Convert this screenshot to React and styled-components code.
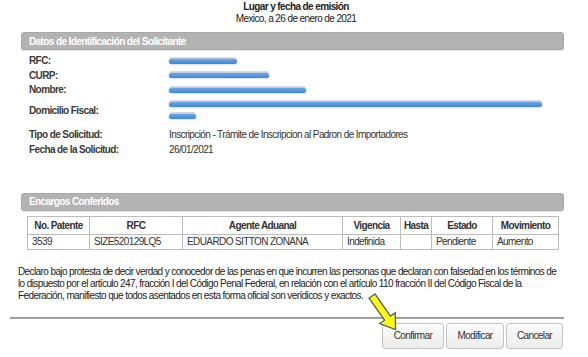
import styled, { createGlobalStyle } from 'styled-components';

const GlobalStyle = createGlobalStyle`
    * {
        box-sizing: border-box;
    }

    body {
        margin: 0;
        background: #fff;
        font-family: 'Liberation Sans', Arial, sans-serif;
        font-size: 10px;
        letter-spacing: -0.6px;
        color: #333;
    }
`;

const datos = [
    { label: 'RFC:', bars: [68] },
    { label: 'CURP:', bars: [100] },
    { label: 'Nombre:', bars: [137] },
    { label: 'Domicilio Fiscal:', bars: [373, 27] },
    { label: 'Tipo de Solicitud:', value: 'Inscripción - Trámite de Inscripcion al Padron de Importadores', spaced: true },
    { label: 'Fecha de la Solicitud:', value: '26/01/2021' },
];

const columnas = [
    { title: 'No. Patente', width: 62 },
    { title: 'RFC', width: 93 },
    { title: 'Agente Aduanal', width: 160 },
    { title: 'Vigencia', width: 58 },
    { title: 'Hasta', width: 31 },
    { title: 'Estado', width: 61 },
    { title: 'Movimiento', width: 66 },
];

const encargos = [['3539', 'SIZE520129LQ5', 'EDUARDO SITTON ZONANA', 'Indefinida', '', 'Pendiente', 'Aumento']];

const botones = [
    { label: 'Confirmar', width: 62 },
    { label: 'Modificar', width: 58 },
    { label: 'Cancelar', width: 57 },
];

const App = () => {
    return (
        <Page>
            <GlobalStyle />
            <Heading>
                <strong>Lugar y fecha de emisión</strong>
                <span>Mexico, a 26 de enero de 2021</span>
            </Heading>

            <Panel>
                <PanelHeader>Datos de Identificación del Solicitante</PanelHeader>
                <InfoGrid>
                    {datos.map((row) => (
                        <InfoRow key={row.label} $spaced={row.spaced}>
                            <Label>{row.label}</Label>
                            {row.value ? (
                                <Value>{row.value}</Value>
                            ) : (
                                <Hidden>
                                    {row.bars.map((w, i) => (
                                        <BlurLine key={i}>
                                            <Redaction style={{ width: w }} />
                                        </BlurLine>
                                    ))}
                                </Hidden>
                            )}
                        </InfoRow>
                    ))}
                </InfoGrid>
            </Panel>

            <Panel $top={37}>
                <PanelHeader>Encargos Conferidos</PanelHeader>
                <Table>
                    <colgroup>
                        {columnas.map((col) => (
                            <col key={col.title} width={col.width} />
                        ))}
                    </colgroup>
                    <thead>
                        <tr>
                            {columnas.map((col) => (
                                <Th key={col.title}>{col.title}</Th>
                            ))}
                        </tr>
                    </thead>
                    <tbody>
                        {encargos.map((row) => (
                            <tr key={row[0]}>
                                {row.map((cell, i) => (
                                    <Td key={i}>{cell}</Td>
                                ))}
                            </tr>
                        ))}
                    </tbody>
                </Table>
            </Panel>

            <Declaration>
                Declaro bajo protesta de decir verdad y conocedor de las penas en que incurren las personas que declaran con falsedad en los términos de
                <br />
                lo dispuesto por el artículo 247, fracción I del Código Penal Federal, en relación con el artículo 110 fracción II del Código Fiscal de la
                <br />
                Federación, manifiesto que todos asentados en esta forma oficial son verídicos y exactos.
            </Declaration>

            <Divider />

            <ButtonBar>
                {botones.map((btn) => (
                    <ActionButton key={btn.label} $width={btn.width}>
                        {btn.label}
                    </ActionButton>
                ))}
            </ButtonBar>

            <Pointer width="48" height="52" viewBox="0 0 48 52">
                <g transform="translate(12 8) rotate(55)">
                    <polygon
                        points="0,-3.6 27,-3.6 27,-9.5 41,0 27,9.5 27,3.6 0,3.6"
                        fill="#ffff00"
                        stroke="#4f5b78"
                        strokeWidth="1.3"
                        strokeLinejoin="miter"
                    />
                </g>
            </Pointer>
        </Page>
    );
};

export default App;

const Page = styled.div`
    position: relative;
    width: 588px;
    height: 357px;
    overflow: hidden;
    padding-top: 1px;
`;

const Heading = styled.div`
    display: flex;
    flex-direction: column;
    align-items: center;
    line-height: 12px;
    color: #222;
    padding-left: 4px;

    strong {
        font-weight: bold;
    }
`;

const Panel = styled.section`
    margin: ${(props) => props.$top || 7}px 24px 0 21px;
`;

const PanelHeader = styled.div`
    height: 18px;
    padding-left: 7px;
    display: flex;
    align-items: center;
    background-color: #b3b3b3;
    border: 1px solid #a8a8a8;
    border-radius: 3px;
    box-shadow: 0 1px 1px rgba(0, 0, 0, 0.12);
    color: #fff;
    font-weight: bold;
`;

const InfoGrid = styled.div`
    display: flex;
    flex-direction: column;
    gap: 2.5px;
    padding: 5px 0 0 8px;
`;

const InfoRow = styled.div`
    display: grid;
    grid-template-columns: 140px 1fr;
    align-items: center;
    line-height: 12px;
    margin-top: ${(props) => (props.$spaced ? 4 : 0)}px;
`;

const Label = styled.span`
    font-weight: bold;
    color: #3a3a3a;
`;

const Value = styled.span`
    color: #333;
`;

const Hidden = styled.div`
    display: flex;
    flex-direction: column;
`;

const BlurLine = styled.div`
    height: 12px;
    display: flex;
    align-items: center;
`;

const Redaction = styled.span`
    display: block;
    height: 5px;
    border-radius: 2px;
    background: linear-gradient(#6ea6e6, #3f86d6);
    box-shadow: 0 0 2px rgba(63, 134, 214, 0.7), 0 -3px 0 -1px rgba(120, 120, 120, 0.25);
`;

const Table = styled.table`
    margin: 5px 0 0 6px;
    width: 531px;
    border-collapse: collapse;
    table-layout: fixed;
`;

const Th = styled.th`
    height: 18px;
    border: 1px solid #bdbdbd;
    font-weight: bold;
    color: #333;
    text-align: center;
    padding: 0 3px;
`;

const Td = styled.td`
    height: 15px;
    border: 1px solid #bdbdbd;
    color: #333;
    padding: 0 3px 0 4px;
    line-height: 12px;
`;

const Declaration = styled.p`
    margin: 16px 0 0 18px;
    line-height: 12px;
    color: #222;
`;

const Divider = styled.hr`
    margin: 15px 24px 0 10px;
    height: 2px;
    border: none;
    background: #a9a9a9;
    border-top: 1px solid #999;
`;

const ButtonBar = styled.div`
    display: flex;
    justify-content: flex-end;
    gap: 2px;
    padding-right: 25px;
    margin-top: 4px;
`;

const ActionButton = styled.button`
    width: ${(props) => props.$width}px;
    height: 26px;
    padding: 0;
    border: 1px solid #c4c4c4;
    border-radius: 3px;
    background: linear-gradient(#fbfbfb, #ececec);
    font-family: 'Liberation Sans', Arial, sans-serif;
    font-size: 10px;
    letter-spacing: -0.6px;
    color: #333;
`;

const Pointer = styled.svg`
    position: absolute;
    left: 360px;
    top: 288px;
    pointer-events: none;
`;
